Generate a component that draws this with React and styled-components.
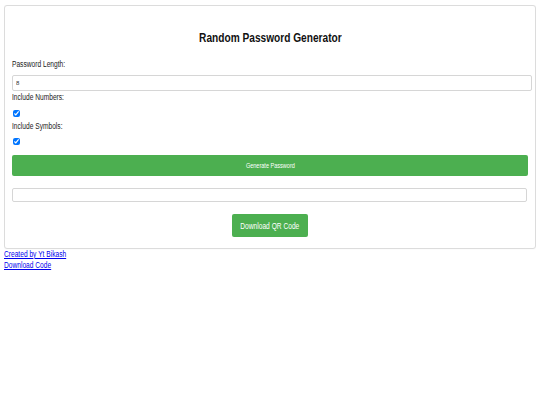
import React, { useState } from "react";
import styled, { createGlobalStyle } from "styled-components";

const Global = createGlobalStyle`
  html, body { background: #ffffff; }
  body {
    margin: 5px 4px 0 4px;
    font-family: "Liberation Sans", Arial, sans-serif;
    color: #111;
  }
  * { box-sizing: border-box; }
`;

const Narrow = styled.span`
  display: inline-block;
  white-space: nowrap;
  transform: scaleX(0.78);
  transform-origin: ${(p) => p.$origin || "left"} center;
`;

const Card = styled.div`
  border: 1px solid #dcdcdc;
  border-radius: 3px;
  background: #fff;
  padding: 7px 7px 10px 7px;
  display: flex;
  flex-direction: column;
  box-shadow: 0 0 2px rgba(0, 0, 0, 0.06);
`;

const Title = styled.h2`
  margin: 17px 0 14px 0;
  font-size: 13px;
  line-height: 16px;
  font-weight: bold;
  text-align: center;
  color: #111;
`;

const Label = styled.label`
  display: block;
  font-size: 8.5px;
  line-height: 9px;
  color: #1a1a1a;
  margin-bottom: ${(p) => p.$gap}px;
`;

const TextInput = styled.input`
  display: block;
  width: calc(100% + ${(p) => p.$extra}px);
  height: ${(p) => p.$h}px;
  margin: 0 0 ${(p) => p.$mb}px 0;
  padding: 0 3px;
  border: 1px solid #d6d6d6;
  border-radius: 2px;
  font-family: inherit;
  font-size: 6px;
  color: #333;
  background: #fff;
  outline: none;
`;

const Check = styled.input`
  display: block;
  width: 7px;
  height: 7px;
  margin: 0 0 ${(p) => p.$mb}px 1px;
  accent-color: #0075ff;
`;

const GenerateButton = styled.button`
  display: flex;
  align-items: center;
  justify-content: center;
  width: 100%;
  height: 21px;
  margin: 0 0 12px 0;
  padding: 0;
  border: none;
  border-radius: 2px;
  background: #4caf50;
  color: #fff;
  font-family: inherit;
  font-size: 7.1px;
  cursor: pointer;
`;

const QrButton = styled.button`
  align-self: center;
  display: flex;
  align-items: center;
  justify-content: center;
  width: 76px;
  height: 23px;
  margin: 0 0 1px 0;
  padding: 0;
  border: none;
  border-radius: 2px;
  background: #4caf50;
  color: #fff;
  font-family: inherit;
  font-size: 8.5px;
  cursor: pointer;
`;

const Footer = styled.div`
  display: flex;
  flex-direction: column;
  align-items: flex-start;
  font-size: 8.5px;
  line-height: 11px;
`;

const Link = styled.a`
  display: inline-block;
  white-space: nowrap;
  transform: scaleX(0.78);
  transform-origin: left center;
  color: #0000ee;
  text-decoration: underline;
`;

export default function App() {
  const [length, setLength] = useState("8");
  const [nums, setNums] = useState(true);
  const [syms, setSyms] = useState(true);
  return (
    <>
      <Global />
      <Card>
        <Title>
          <Narrow $origin="center">Random Password Generator</Narrow>
        </Title>
        <Label $gap={6}>
          <Narrow>Password Length:</Narrow>
        </Label>
        <TextInput
          $extra={4}
          $h={16}
          $mb={2}
          type="text"
          value={length}
          onChange={(e) => setLength(e.target.value)}
        />
        <Label $gap={8}>
          <Narrow>Include Numbers:</Narrow>
        </Label>
        <Check type="checkbox" $mb={5} checked={nums} onChange={() => setNums(!nums)} />
        <Label $gap={7}>
          <Narrow>Include Symbols:</Narrow>
        </Label>
        <Check type="checkbox" $mb={10} checked={syms} onChange={() => setSyms(!syms)} />
        <GenerateButton>
          <Narrow $origin="center">Generate Password</Narrow>
        </GenerateButton>
        <TextInput $extra={-1} $h={14} $mb={12} type="text" readOnly value="" />
        <QrButton>
          <Narrow $origin="center">Download QR Code</Narrow>
        </QrButton>
      </Card>
      <Footer>
        <Link href="#">Created by Yt Bikash</Link>
        <Link href="#">Download Code</Link>
      </Footer>
    </>
  );
}
